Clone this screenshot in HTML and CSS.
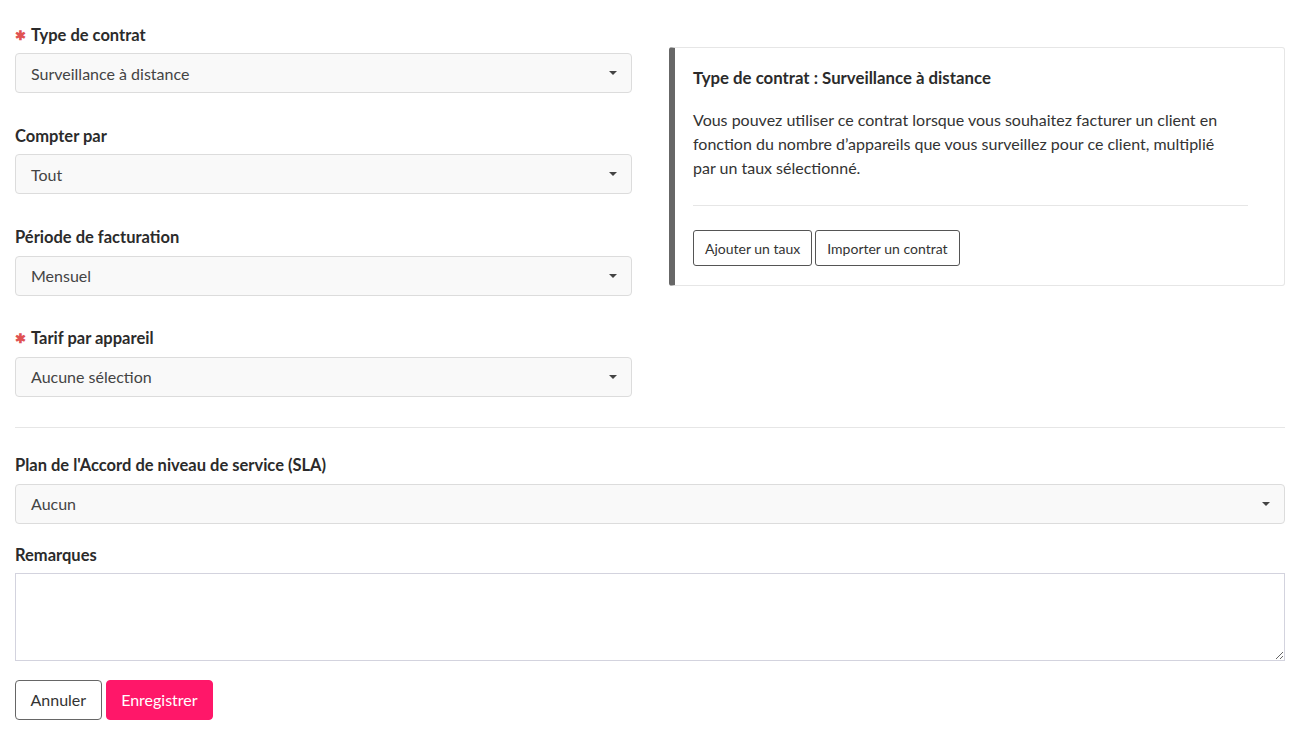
FILE: index.html
```html
<!DOCTYPE html>
<html lang="fr">
<head>
<meta charset="utf-8">
<title>Contrat</title>
<link rel="stylesheet" href="styles.css">
</head>
<body>
<div class="page">
  <div class="top">
    <div class="fields">
      <div class="group">
        <label class="label"><span class="req">✱</span>Type de contrat</label>
        <div class="select"><span>Surveillance à distance</span><span class="caret"></span></div>
      </div>
      <div class="group">
        <label class="label">Compter par</label>
        <div class="select"><span>Tout</span><span class="caret"></span></div>
      </div>
      <div class="group">
        <label class="label">Période de facturation</label>
        <div class="select"><span>Mensuel</span><span class="caret"></span></div>
      </div>
      <div class="group last">
        <label class="label"><span class="req">✱</span>Tarif par appareil</label>
        <div class="select"><span>Aucune sélection</span><span class="caret"></span></div>
      </div>
    </div>
    <div class="info">
      <h3 class="info-title">Type de contrat : Surveillance à distance</h3>
      <p class="info-text">Vous pouvez utiliser ce contrat lorsque vous souhaitez facturer un client en fonction du nombre d’appareils que vous surveillez pour ce client, multiplié par un taux sélectionné.</p>
      <hr class="info-sep">
      <div class="info-actions">
        <button class="btn-sm">Ajouter un taux</button>
        <button class="btn-sm">Importer un contrat</button>
      </div>
    </div>
  </div>
  <hr class="sep">
  <div class="group sla">
    <label class="label">Plan de l'Accord de niveau de service (SLA)</label>
    <div class="select"><span>Aucun</span><span class="caret"></span></div>
  </div>
  <div class="group notes">
    <label class="label">Remarques</label>
    <textarea class="textarea"></textarea>
  </div>
  <div class="actions">
    <button class="btn btn-default">Annuler</button>
    <button class="btn btn-primary">Enregistrer</button>
  </div>
</div>
</body>
</html>
```

FILE: styles.css
```css
* { box-sizing: border-box; }
html, body { margin: 0; padding: 0; background: #fff; }
body {
  font-family: "Lato", "Liberation Sans", sans-serif;
  font-size: 16px;
  color: #333;
}
.page { padding: 24px 20px 0 15px; }
.top {
  display: grid;
  grid-template-columns: 617px 1fr;
  column-gap: 37px;
  align-items: start;
}
.group { margin-bottom: 32.3px; }
.group.last { margin-bottom: 0; }
.label {
  display: flex;
  align-items: center;
  font-weight: 700;
  font-size: 16.5px;
  line-height: 20px;
  height: 20px;
  padding-top: 1px;
  margin-bottom: 9px;
  color: #2b2b2b;
}
.req {
  color: #e05252;
  font-size: 13px;
  width: 16px;
  padding-left: 0;
}
.select {
  display: flex;
  align-items: center;
  justify-content: space-between;
  height: 40px;
  padding: 0 14px 0 15px;
  background: #f9f9f9;
  border: 1px solid #dcdcdc;
  border-radius: 4px;
  color: #444;
}
.caret {
  width: 0; height: 0;
  border-left: 4px solid transparent;
  border-right: 4px solid transparent;
  border-top: 4px solid #444;
}
.info {
  margin-top: 23px;
  border: 1px solid #e6e6e6;
  border-left: 6px solid #676767;
  border-radius: 3px;
  padding: 19px 36px 19px 18px;
}
.info-title {
  margin: 0 0 19px;
  font-size: 16.8px;
  line-height: 22px;
  font-weight: 700;
  color: #2b2b2b;
}
.info-text {
  margin: 0;
  font-size: 16px;
  line-height: 24px;
  color: #333;
  max-width: 540px;
}
.info-sep {
  border: 0;
  border-top: 1px solid #e6e6e6;
  margin: 25px 0 24px;
}
.info-actions { display: flex; gap: 3px; }
.btn-sm {
  font-family: inherit;
  font-size: 14px;
  height: 36px;
  padding: 0 11px;
  background: #fff;
  border: 1px solid #555;
  border-radius: 3px;
  color: #333;
}
.sep {
  border: 0;
  border-top: 1px solid #e6e6e6;
  margin: 30px 0 27px;
}
.group.sla { margin-bottom: 21px; }
.group.notes { margin-bottom: 19px; }
.group.notes .label { margin-bottom: 8px; }
.textarea {
  display: block;
  width: 100%;
  height: 88px;
  border: 1px solid #d3d3de;
  border-radius: 0;
  resize: vertical;
  font-family: inherit;
}
.actions { display: flex; gap: 4px; }
.btn {
  font-family: inherit;
  font-size: 16px;
  height: 40px;
  padding: 0 14.5px;
  border-radius: 4px;
}
.btn-default { background: #fff; border: 1px solid #666; color: #333; }
.btn-primary { background: #ff1769; border: 1px solid #ff1769; color: #fff; }
```
